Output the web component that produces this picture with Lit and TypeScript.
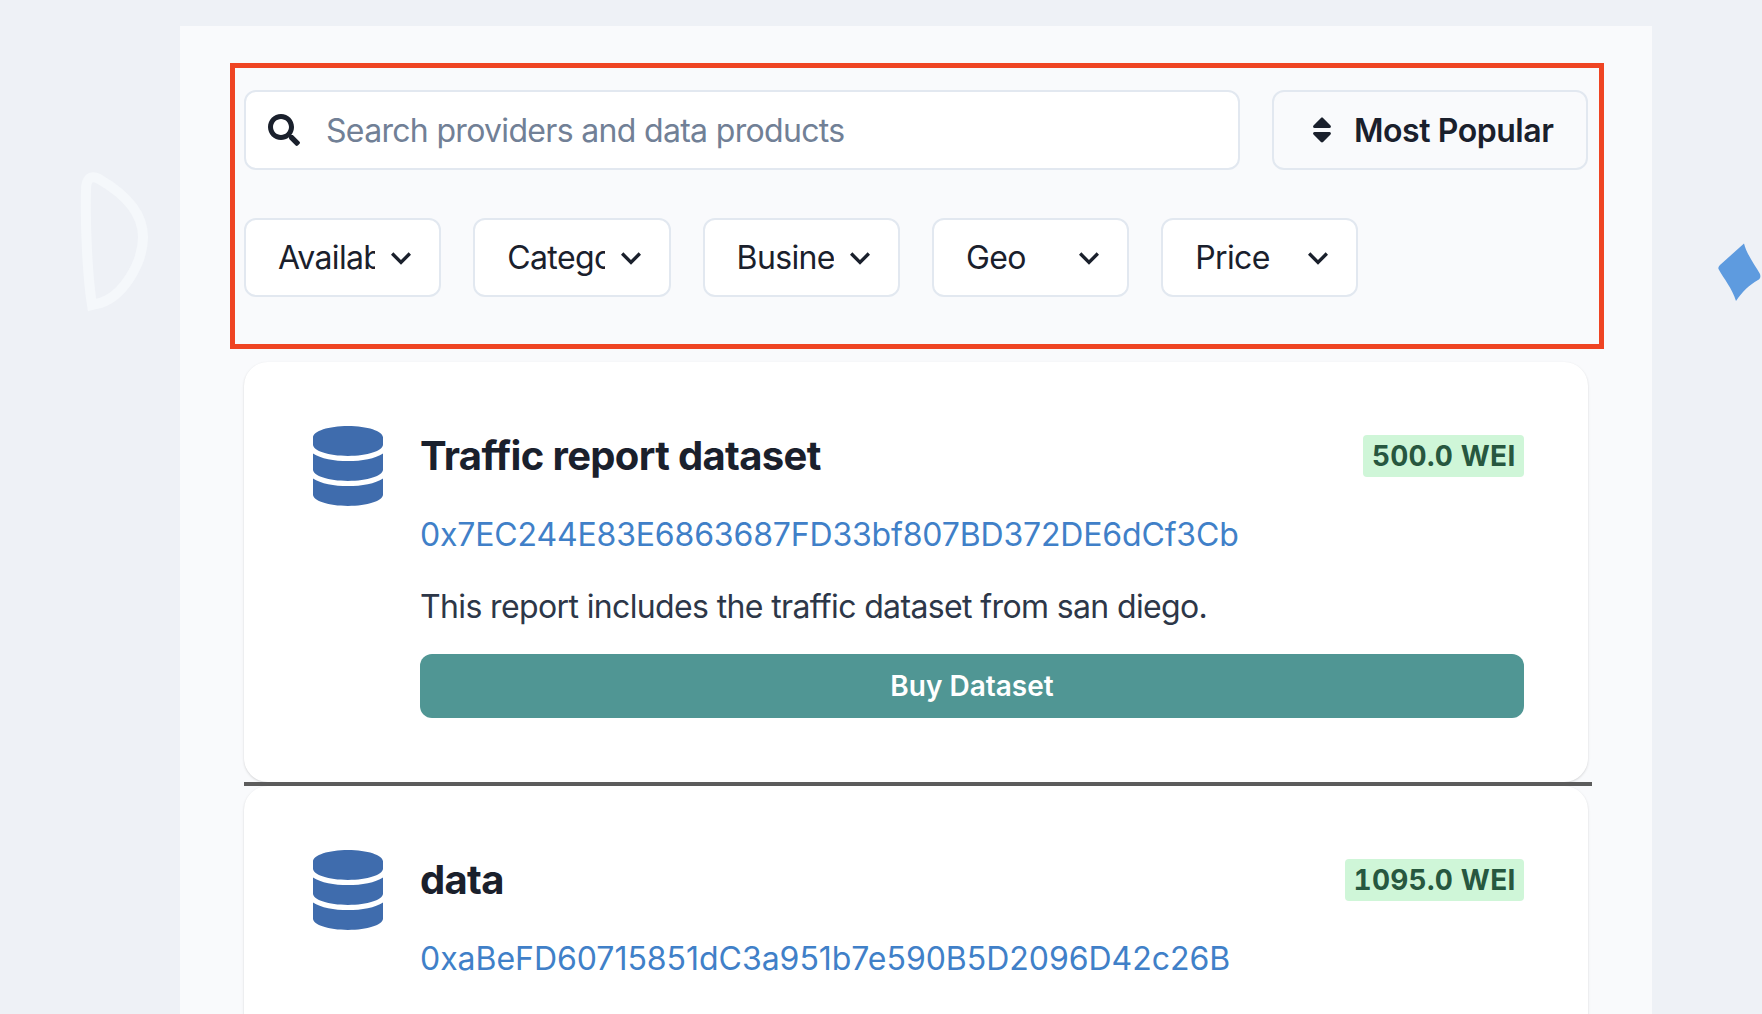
import { LitElement, html, css, svg } from 'lit';
import { customElement } from 'lit/decorators.js';

const FILTERS = ['Availability', 'Category', 'Business', 'Geo', 'Price'];

const PRODUCTS = [
  {
    name: 'Traffic report dataset',
    price: '500.0 WEI',
    address: '0x7EC244E83E6863687FD33bf807BD372DE6dCf3Cb',
    description: 'This report includes the traffic dataset from san diego.',
  },
  {
    name: 'data',
    price: '1095.0 WEI',
    address: '0xaBeFD60715851dC3a951b7e590B5D2096D42c26B',
    description: 'This report includes the traffic dataset from san diego.',
  },
];

const databasePath = svg`<path d="M448 73.143v45.714C448 159.143 347.667 192 224 192S0 159.143 0 118.857V73.143C0 32.857 100.333 0 224 0s224 32.857 224 73.143zM448 176v102.857C448 319.143 347.667 352 224 352S0 319.143 0 278.857V176c48.125 33.143 136.208 48.572 224 48.572S399.874 209.143 448 176zm0 160v102.857C448 479.143 347.667 512 224 512S0 479.143 0 438.857V336c48.125 33.143 136.208 48.572 224 48.572S399.874 369.143 448 336z"/>`;

@customElement('app-root')
export class AppRoot extends LitElement {
  static styles = css`
    :host {
      display: block;
      position: relative;
      height: 1014px;
      overflow: hidden;
      padding-top: 26px;
      box-sizing: border-box;
      background: #eef1f6;
      font-family: Inter, 'Liberation Sans', sans-serif;
      color: #1a202c;
    }

    /* background doodles */
    .doodle {
      position: absolute;
    }
    .doodle--outline {
      left: 70px;
      top: 160px;
    }
    .doodle--kite {
      left: 1716px;
      top: 241px;
    }

    .panel {
      position: relative;
      box-sizing: border-box;
      width: 1472px;
      min-height: 1200px;
      margin-left: 180px;
      padding: 64px 64px 0;
      background: #f9fafc;
    }

    /* red annotation frame */
    .highlight {
      position: absolute;
      left: 50px;
      top: 37px;
      width: 1374px;
      height: 286px;
      box-sizing: border-box;
      border: 5px solid #ef4423;
      pointer-events: none;
    }

    .toolbar {
      display: flex;
      gap: 32px;
    }

    .search,
    .sort,
    .filter {
      box-sizing: border-box;
      display: flex;
      align-items: center;
      border: 2px solid #e2e8f0;
      border-radius: 12px;
      letter-spacing: -0.64px;
    }

    .search,
    .sort {
      height: 80px;
    }

    .search {
      flex: 1;
      gap: 26px;
      padding-left: 22px;
      background: #fff;
      font-size: 32px;
      letter-spacing: -0.68px;
      color: #718096;
    }
    .search svg {
      width: 32px;
      height: 32px;
      fill: #1a202c;
    }

    .sort {
      width: 316px;
      padding-left: 38px;
      gap: 22px;
      font-size: 32px;
      font-weight: 600;
      letter-spacing: -0.45px;
    }
    .sort svg {
      width: 20px;
      height: 32px;
      fill: #1a202c;
    }

    .filters {
      display: flex;
      gap: 32px;
      margin: 48px 0 65px;
    }

    .filter {
      width: 197.3px;
      height: 79px;
      padding: 0 18px 0 32px;
      gap: 6px;
      background: #fff;
      font-size: 32px;
    }
    .filter span {
      flex: 1;
      min-width: 0;
      overflow: hidden;
      white-space: nowrap;
    }
    .filter svg {
      flex: none;
      width: 40px;
      height: 40px;
      fill: #1a202c;
    }

    .card {
      display: flex;
      gap: 32px;
      padding: 64px;
      background: #fff;
      border-radius: 24px;
      box-shadow: 0 1px 3px rgba(0, 0, 0, 0.1), 0 1px 2px rgba(0, 0, 0, 0.06);
    }

    .icon {
      flex: none;
      width: 80px;
      height: 80px;
      display: flex;
      justify-content: center;
    }
    .icon svg {
      width: 70px;
      height: 80px;
      fill: #3f6cad;
    }

    .body {
      flex: 1;
      min-width: 0;
    }

    .head {
      display: flex;
      align-items: center;
      justify-content: space-between;
      height: 60px;
    }
    .head h2 {
      margin: 0;
      font-size: 40px;
      line-height: 60px;
      font-weight: 700;
      letter-spacing: -0.66px;
    }

    .price {
      padding: 0 8.5px;
      height: 42px;
      line-height: 43px;
      border-radius: 4px;
      background: #cff6d8;
      color: #27573f;
      font-size: 28px;
      font-weight: 700;
      letter-spacing: 0.25px;
      font-variant-numeric: tabular-nums;
    }

    .address {
      margin-top: 27px;
      font-size: 32px;
      line-height: 44px;
      letter-spacing: -0.16px;
      color: #4080c8;
    }
    /* this address has more narrow 1s, the reference sets them wider */
    .address--loose {
      letter-spacing: -0.03px;
    }

    .description {
      margin-top: 28px;
      font-size: 32px;
      line-height: 44px;
      letter-spacing: -0.63px;
      color: #2d3748;
    }

    .buy {
      display: flex;
      align-items: center;
      justify-content: center;
      height: 64px;
      margin-top: 25px;
      border-radius: 12px;
      background: #509694;
      color: #fff;
      font-size: 28px;
      font-weight: 600;
    }

    .divider {
      height: 4px;
      width: 1348px;
      background: #5c5c5c;
    }
  `;

  render() {
    return html`
      <svg class="doodle doodle--outline" width="90" height="160" viewBox="0 0 90 160" fill="none">
        <path d="M16 30 C16 18 21 15 29 19 C55 34 73 53 73 77 C73 102 53 139 26 144 L22 145 C18 120 15 70 16 30 Z" stroke="#f5f8fb" stroke-width="10" />
      </svg>
      <svg class="doodle doodle--kite" width="46" height="62" viewBox="0 0 46 62">
        <path d="M28 2.5 C31 14 39 24 44 33 C45 36 44 38 42 39 C33 44 26 51 20 60 C16 47 8 38 2.5 28 C2 26.5 3 25 4 24 Z" fill="#5e9bdf" />
      </svg>

      <div class="panel">
        <div class="toolbar">
          <div class="search">
            <svg viewBox="0 0 512 512"><path d="M505 442.7L405.3 343c-4.5-4.5-10.6-7-17-7H372c27.6-35.3 44-79.7 44-128C416 93.1 322.9 0 208 0S0 93.1 0 208s93.1 208 208 208c48.3 0 92.7-16.4 128-44v16.3c0 6.4 2.5 12.5 7 17l99.7 99.7c9.4 9.4 24.6 9.4 33.9 0l28.3-28.3c9.4-9.4 9.4-24.6.1-34zM208 336c-70.7 0-128-57.2-128-128 0-70.7 57.2-128 128-128 70.7 0 128 57.2 128 128 0 70.7-57.2 128-128 128z"/></svg>
            Search providers and data products
          </div>
          <div class="sort">
            <svg viewBox="0 0 320 512"><path d="M41 288h238c21.4 0 32.1 25.9 17 41L177 448c-9.4 9.4-24.6 9.4-33.9 0L24 329c-15.1-15.1-4.4-41 17-41zm255-105L177 64c-9.4-9.4-24.6-9.4-33.9 0L24 183c-15.1 15.1-4.4 41 17 41h238c21.4 0 32.1-25.9 17-41z"/></svg>
            Most Popular
          </div>
        </div>

        <div class="filters">
          ${FILTERS.map(
            (label) => html`
              <div class="filter">
                <span>${label}</span>
                <svg viewBox="0 0 24 24"><path d="M16.59 8.59L12 13.17 7.41 8.59 6 10l6 6 6-6z"/></svg>
              </div>
            `
          )}
        </div>

        ${PRODUCTS.map(
          (item, i) => html`
            ${i > 0 ? html`<div class="divider"></div>` : ''}
            <div class="card">
              <div class="icon"><svg viewBox="0 0 448 512">${databasePath}</svg></div>
              <div class="body">
                <div class="head">
                  <h2>${item.name}</h2>
                  <div class="price">${item.price}</div>
                </div>
                <div class="address ${i > 0 ? 'address--loose' : ''}">${item.address}</div>
                <div class="description">${item.description}</div>
                <div class="buy">Buy Dataset</div>
              </div>
            </div>
          `
        )}

        <div class="highlight"></div>
      </div>
    `;
  }
}

declare global {
  interface HTMLElementTagNameMap {
    'app-root': AppRoot;
  }
}
